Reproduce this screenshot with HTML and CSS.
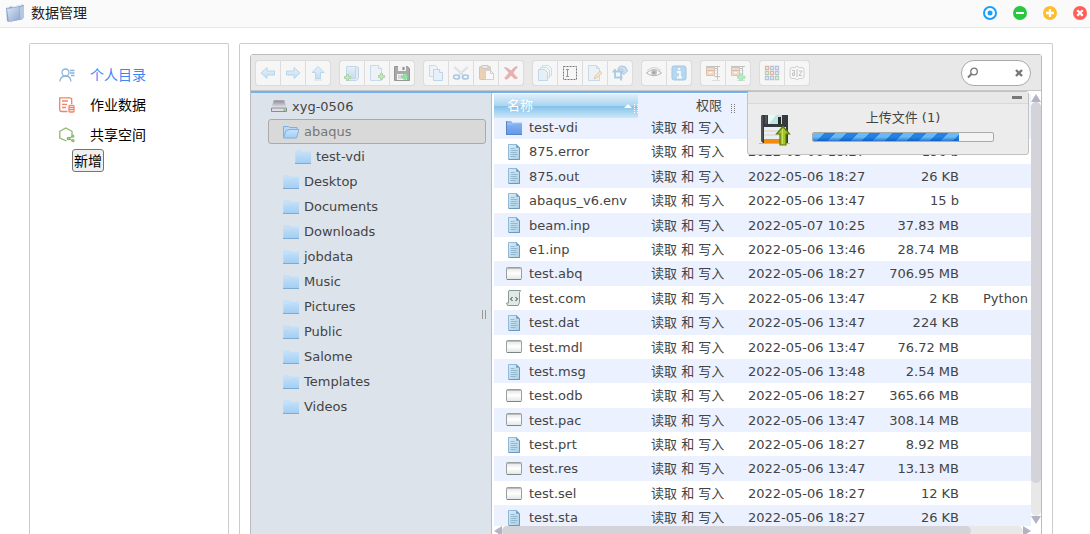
FILE: index.html
```html
<!DOCTYPE html>
<html lang="zh-CN">
<head>
<meta charset="utf-8">
<title>数据管理</title>
<link rel="stylesheet" href="styles.css">
</head>
<body>
<svg class="sprite" aria-hidden="true">
  <defs>
    <linearGradient id="g-blue" x2="0" y2="1"><stop offset="0" stop-color="#d3e9fb"/><stop offset="1" stop-color="#7db8ea"/></linearGradient>
    <linearGradient id="g-light" x2="0" y2="1"><stop offset="0" stop-color="#c9e2f8"/><stop offset="1" stop-color="#a2cff5"/></linearGradient>
    <linearGradient id="g-dir" x2="0" y2="1"><stop offset="0" stop-color="#8db8f2"/><stop offset="1" stop-color="#669be8"/></linearGradient>
    <linearGradient id="g-app" x2="0" y2="1"><stop offset="0" stop-color="#e2e2e2"/><stop offset=".5" stop-color="#fff"/><stop offset="1" stop-color="#dfe5e2"/></linearGradient>
    <linearGradient id="g-doc" x2="1" y2="1"><stop offset="0" stop-color="#d8ecf6"/><stop offset="1" stop-color="#a9d0e8"/></linearGradient>
    <linearGradient id="g-win" x2="1" y2="1"><stop offset="0" stop-color="#dce6f5"/><stop offset="1" stop-color="#8ba4cc"/></linearGradient>
    <linearGradient id="g-hdd" x2="0" y2="1"><stop offset="0" stop-color="#8d8d98"/><stop offset="1" stop-color="#ececf2"/></linearGradient>
    <symbol id="i-plus" viewBox="0 0 16 16"><path d="M2.500.5h2v2h2v2h-2v2h-2v-2h-2v-2h2z" fill="#84dd68" stroke="#3c9a36"/></symbol>
    <symbol id="i-back" viewBox="0 0 16 16"><path d="M1 8l6-5.500v3.500h7.500v4H7v3.500z" fill="url(#g-blue)" stroke="#58a7dc"/></symbol>
    <symbol id="i-fwd" viewBox="0 0 16 16"><path d="M15 8L9 2.500V6H1.500v4H9v3.500z" fill="url(#g-blue)" stroke="#58a7dc"/></symbol>
    <symbol id="i-up" viewBox="0 0 16 16"><path d="M8 1.500L2 7.500h3.500v6h5v-6H14z" fill="url(#g-blue)" stroke="#58a7dc"/><path d="M4 15h8" stroke="#8bbadb"/></symbol>
    <symbol id="i-copy" viewBox="0 0 16 16"><path d="M1.500.5h6l2 2v9h-8z" fill="#e1f0fb" stroke="#80b2db"/><path d="M5.500 4.500h6l3 3v8h-9z" fill="#d5e9f9" stroke="#6ca6d8"/><path d="M11.500 4.500v3h3" fill="#fff" stroke="#6ca6d8"/></symbol>
    <symbol id="i-mkdir" viewBox="0 0 16 16"><path d="M2.500 1.500h9v12h-9z" fill="url(#g-blue)" stroke="#77a8d3"/><path d="M11.500 1.500l3 1v11l-2 2h-10l1-2h8z" fill="#c5dcf2" stroke="#77a8d3"/><use href="#i-plus" x="0" y="9" width="16" height="16"/></symbol>
    <symbol id="i-mkfile" viewBox="0 0 16 16"><path d="M1.500.5h8l3 3v12h-11z" fill="#e0eefa" stroke="#7fb2dc"/><path d="M9.500.5v3h3" fill="#fff" stroke="#7fb2dc"/><use href="#i-plus" x="9" y="8" width="16" height="16"/></symbol>
    <symbol id="i-save" viewBox="0 0 16 16"><path d="M.5 1.500h13l2 2v12H.5z" fill="#777" stroke="#555"/><path d="M4 1h8v5H4zM3 9h10v6H3z" fill="#f2f2f2"/><path d="M9.500 2v3" stroke="#444" stroke-width="2"/><path d="M4 11h7M4 13h6" stroke="#999"/><path d="M9.500 8.500h3V11H15l-4 4.500L7 11h2.500z" fill="#43db71" stroke="#25a44a" stroke-width=".5"/></symbol>
    <symbol id="i-cut" viewBox="0 0 16 16"><path d="M1.500 2l10 9M14.500 2l-10 9" stroke="#92a8bc" stroke-width="2"/><path d="M2 2l10 9M14 2L4 11" stroke="#e4edf3"/><ellipse cx="3.500" cy="12" rx="3" ry="2" fill="none" stroke="#3986cf" stroke-width="1.700"/><ellipse cx="12.500" cy="12" rx="3" ry="2" fill="none" stroke="#3986cf" stroke-width="1.700"/></symbol>
    <symbol id="i-paste" viewBox="0 0 16 16"><rect x="1.500" y="1.500" width="11" height="13" rx="1" fill="#d99a55" stroke="#b77633"/><path d="M4 .5h6v3H4z" fill="#d9d9d9" stroke="#888"/><path d="M7.500 5.500h5l3 3v6h-8z" fill="#fff" stroke="#999"/><path d="M12.500 5.500v3h3" fill="none" stroke="#999"/></symbol>
    <symbol id="i-rm" viewBox="0 0 16 16"><path d="M1.500 2.500Q4 2 8 6q3-4 5.500-4.500L14.500 2Q12 4.500 10 8q2.500 3 4.500 5l-2.500 1Q10 12.500 8 10q-2 3-4.500 4.500L1.500 13Q4 11 6 7.700 4 5 1.500 3z" fill="#dc4848" stroke="#b22626" stroke-width=".5"/></symbol>
    <symbol id="i-dup" viewBox="0 0 16 16"><path d="M5.500.5h6l3 3v7h-9z" fill="#e9f4fb" stroke="#8bb9dd"/><path d="M3.500 2.500h6l3 3v7h-9z" fill="#e9f4fb" stroke="#8bb9dd"/><path d="M1.500 4.500h6l3 3v8h-9z" fill="#cfe5f7" stroke="#77abd8"/></symbol>
    <symbol id="i-rename" viewBox="0 0 16 16"><path d="M1.500 1.500h13v13h-13z" fill="none" stroke="#222" stroke-dasharray="2 1"/><path d="M4 4.500h3M4 11.500h3M5.500 4.500v7" stroke="#555"/></symbol>
    <symbol id="i-edit" viewBox="0 0 16 16"><path d="M1.500.5h8l3 3v12h-11z" fill="#dcecf9" stroke="#80b1da"/><path d="M9.500.5v3h3" fill="none" stroke="#80b1da"/><path d="M7 14l1-3 5-5 2 2-5 5z" fill="#edc278" stroke="#b77c37" stroke-width=".7"/></symbol>
    <symbol id="i-resize" viewBox="0 0 16 16"><path d="M3 4v8.500h7.500M.5 6.500h8.500v9" fill="none" stroke="#3c8bc8" stroke-width="1.800"/><path d="M6 5q0-4 4.500-4 3.500 0 4.500 4l.5 1-3.500 3.500L8.500 7H11q0-3-2-3Q7.500 4 7 6z" fill="#8cc4f0" stroke="#2b79bc"/></symbol>
    <symbol id="i-eye" viewBox="0 0 16 16"><path d="M.5 8Q8 1 15.500 8 8 13.500.5 8z" fill="#fff" stroke="#555"/><circle cx="8" cy="7.500" r="3" fill="#777"/><circle cx="8" cy="7.500" r="1.300" fill="#222"/><path d="M1 5.500Q8-.5 15 5.500" fill="none" stroke="#777" stroke-width=".7"/></symbol>
    <symbol id="i-info" viewBox="0 0 16 16"><rect x="1" y="1" width="14" height="14" rx="2" fill="#58a9e8" stroke="#347fbc"/><path d="M6 7h3v5M6 12.500h5M7.200 4h2" fill="none" stroke="#fff" stroke-width="1.800"/></symbol>
    <symbol id="i-zip" viewBox="0 0 16 16"><path d="M1.500 2.500h8v8h-8z" fill="#f0b277" stroke="#bd7344"/><path d="M2 5.500h7" stroke="#b55f3c"/><path d="M4 7.500h3" stroke="#fff"/><path d="M1 1.500h14M9.500 3.500H13M12.500 2v9M9.500 11.500H15M12.500 12v2.500" stroke="#777"/><path d="M10.500 5.500h4M10.500 8.500h4" stroke="#999" stroke-dasharray="1 1"/><path d="M7 15.500h8" stroke="#bbb"/></symbol>
    <symbol id="i-archive" viewBox="0 0 16 16"><use href="#i-zip" width="16" height="16"/><path d="M9.500 9v2H7.500v2.500h2v2h3v-2h2.500V11h-2.500V9z" fill="#54df79" stroke="#2fb658" stroke-width=".7"/></symbol>
    <symbol id="i-grid" viewBox="0 0 16 16"><g fill="#fff" stroke-width="1.300"><path d="M1.500 1.500h3v3h-3zM6.500 6.500h3v3h-3z" stroke="#c55320"/><path d="M6.500 1.500h3v3h-3zM11.500 1.500h3v3h-3zM11.500 6.500h3v3h-3zM1.500 11.500h3v3h-3zM6.500 11.500h3v3h-3z" stroke="#5578b6"/><path d="M1.500 6.500h3v3h-3zM11.500 11.500h3v3h-3z" stroke="#4f9b50"/></g></symbol>
    <symbol id="i-sort" viewBox="0 0 16 16"><path d="M3 2.500h3L8 1l2 1.500h3Q15 2.500 15 5v6q0 2.500-2 2.500h-3L8 15l-2-1.500H3Q1 13.500 1 11V5q0-2.500 2-2.500z" fill="#fafafa" stroke="#999"/><path d="M3 5.500h2.500v5H3.500v-2.500h2M8 4v8M10 6h3l-3 4.500h3" fill="none" stroke="#777"/></symbol>
    <symbol id="i-folder" viewBox="0 0 16 16"><path d="M0 1.500L1 1h5l2 2h8v11H0z" fill="url(#g-light)"/><path d="M0 4.500h6L8 3h8M0 2v11" fill="none" stroke="#c5e0f7"/><path d="M0 14.500h16" stroke="#80abd0"/></symbol>
    <symbol id="i-open" viewBox="0 0 16 16"><path d="M.5 13V2.500h5l1.500 1h7V6" fill="#b9daf6" stroke="#79b2e4"/><path d="M.5 14L3 6.500l4-1h9L13.500 14z" fill="url(#g-light)" stroke="#79b2e4"/></symbol>
    <symbol id="i-hdd" viewBox="0 0 16 16"><path d="M3 1.500h10L16 9H0z" fill="url(#g-hdd)"/><path d="M.5 9h15v3.500H.5z" fill="#dedee8" stroke="#77747e" stroke-width=".8"/><path d="M2.500 2h11" stroke="#9a97a2"/><path d="M12.500 11h2" stroke="#43cf35" stroke-width="1.500"/></symbol>
    <symbol id="i-dir" viewBox="0 0 16 16"><path d="M0 2l1-1h4l2 2h9v11H0z" fill="url(#g-dir)"/><path d="M0 4h6l2-1h8" fill="none" stroke="#a6c8f6"/><path d="M0 14.500h16M.5 1v13" stroke="#5484c9"/></symbol>
    <symbol id="i-txt" viewBox="0 0 16 16"><path d="M2.500.5h8l3 3v12h-11z" fill="url(#g-doc)" stroke="#8fb9d6"/><path d="M10.500.5v3h3z" fill="#6294c2" stroke="#7faccc"/><path d="M4.500 4.500h4M4.500 6.500h7M4.500 8.500h6M4.500 10.500h7M4.500 12.500h5" stroke="#86aec5" stroke-width=".8"/><path d="M3 15.500h10.500V4" fill="none" stroke="#6d97c0"/></symbol>
    <symbol id="i-app" viewBox="0 0 16 16"><rect x=".5" y="1.500" width="15" height="12" rx="1" fill="url(#g-app)" stroke="#97a09e"/><path d="M1 2.500h14" stroke="#bbb"/><path d="M1 13.500h14" stroke="#7b8582"/></symbol>
    <symbol id="i-code" viewBox="0 0 16 16"><path d="M3 .5h11.500l-1 2v10L12 15.500H1.500L.5 13h2V2z" fill="#dfe9e5" stroke="#849a91"/><path d="M6.500 7L4.500 9l2 2M9.500 7l2 2-2 2" fill="none" stroke="#333"/></symbol>
  </defs>
</svg>

<header class="titlebar">
  <svg class="titlebar-icon" viewBox="0 0 20 20"><path d="M1 5l5-2 2 1 9-2.500 2 1V14l-2 2.500L4 19l-2-1z" fill="#8ba3cc"/><path d="M2 6l12-2 1 12-11 3z" fill="url(#g-win)"/><path d="M14.500 4L19 3v11l-3.500 2.500z" fill="#b7c8e3"/><path d="M2 5l4-2 2 1 9-2" fill="none" stroke="#e4ebf5"/></svg>
  <h1>数据管理</h1>
  <div class="window-actions">
    <button aria-label="还原"><svg viewBox="0 0 14 14"><circle cx="7" cy="7" r="6" fill="#fff" stroke="#18a0fb" stroke-width="2"/><circle cx="7" cy="7" r="2.500" fill="#18a0fb"/></svg></button>
    <button aria-label="最小化"><svg viewBox="0 0 14 14"><circle cx="7" cy="7" r="7" fill="#28c940"/><path d="M3 7h8" stroke="#fff" stroke-width="2"/></svg></button>
    <button aria-label="最大化"><svg viewBox="0 0 14 14"><circle cx="7" cy="7" r="7" fill="#ffbd2e"/><path d="M3 7h8M7 3v8" stroke="#fff" stroke-width="2.300"/></svg></button>
    <button aria-label="关闭"><svg viewBox="0 0 14 14"><circle cx="7" cy="7" r="7" fill="#ff5f57"/><path d="M4.300 4.300l5.400 5.400M9.700 4.300L4.300 9.700" stroke="#fff" stroke-width="2.300"/></svg></button>
  </div>
</header>

<main class="workspace">
  <nav class="sidebar">
    <a class="nav-link active" href="#home"><svg viewBox="0 0 16 16" fill="none" stroke="#8bb3da" stroke-width="1.300"><circle cx="6.500" cy="5.500" r="3.500"/><path d="M.8 14.500Q1.500 9 6.500 9t5.500 5.500M11 3.500h4.500M11 6h4.500M12 8.500h3.500"/></svg>个人目录</a>
    <a class="nav-link" href="#jobs"><svg viewBox="0 0 16 16" fill="none" stroke="#f08468" stroke-width="1.300"><path d="M8.500 14.500h-6Q.7 14.500.7 12.500V.8h10q2 0 2 2V7M3 4h6M3 7.300h5M3 10.500h4"/><rect x="10" y="8.500" width="5" height="6.500" rx="1"/><path d="M10 10.700h5M10 12.700h5"/></svg>作业数据</a>
    <a class="nav-link" href="#shared"><svg viewBox="0 0 16 16" fill="none" stroke="#8bb86c" stroke-width="1.300"><path d="M7.500 14L.8 11V4.300L6.800 1 13 4.300V8"/><path d="M9.500 11.500l4-2M9.500 11.500l4 2"/><circle cx="9.500" cy="11.500" r="1.200"/><circle cx="13.700" cy="9.200" r="1"/><circle cx="14" cy="13.700" r="1"/></svg>共享空间</a>
    <button class="add-button">新增</button>
  </nav>

  <section class="panel">
    <div class="finder">
      <div class="toolbar">
        <div class="group">
          <button aria-label="后退"><svg><use href="#i-back"/></svg></button><button aria-label="前进"><svg><use href="#i-fwd"/></svg></button><button aria-label="上级目录"><svg><use href="#i-up"/></svg></button>
        </div>
        <div class="group">
          <button aria-label="新建文件夹"><svg><use href="#i-mkdir"/></svg></button><button aria-label="新建文件"><svg><use href="#i-mkfile"/></svg></button><button class="enabled" aria-label="上传"><svg><use href="#i-save"/></svg></button>
        </div>
        <div class="group">
          <button aria-label="复制"><svg><use href="#i-copy"/></svg></button><button aria-label="剪切"><svg><use href="#i-cut"/></svg></button><button aria-label="粘贴"><svg><use href="#i-paste"/></svg></button><button aria-label="删除"><svg><use href="#i-rm"/></svg></button>
        </div>
        <div class="group">
          <button aria-label="创建副本"><svg><use href="#i-dup"/></svg></button><button class="enabled" aria-label="重命名"><svg><use href="#i-rename"/></svg></button><button aria-label="编辑"><svg><use href="#i-edit"/></svg></button><button aria-label="调整尺寸"><svg><use href="#i-resize"/></svg></button>
        </div>
        <div class="group">
          <button aria-label="预览"><svg><use href="#i-eye"/></svg></button><button aria-label="信息"><svg><use href="#i-info"/></svg></button>
        </div>
        <div class="group">
          <button aria-label="解压"><svg><use href="#i-zip"/></svg></button><button aria-label="压缩"><svg><use href="#i-archive"/></svg></button>
        </div>
        <div class="group">
          <button aria-label="图标视图"><svg><use href="#i-grid"/></svg></button><button aria-label="排序"><svg><use href="#i-sort"/></svg></button>
        </div>
        <div class="search">
          <svg viewBox="0 0 12 12" fill="none" stroke="#777"><circle cx="7" cy="4.500" r="3.300" stroke-width="1.300"/><path d="M4.500 7L1 10.500" stroke-width="2"/></svg>
          <input type="text" aria-label="搜索">
          <button aria-label="清除"><svg viewBox="0 0 8 8"><path d="M1 1l6 6M7 1L1 7" stroke="#777" stroke-width="2.400"/></svg></button>
        </div>
      </div>
      <div class="loading"></div>

      <div class="browser">
        <div class="tree">
          <a class="node" href="#root"><svg><use href="#i-hdd"/></svg>xyg-0506</a>
          <a class="node level-1 selected" href="#abaqus"><svg><use href="#i-open"/></svg>abaqus</a>
          <a class="node level-2" href="#test-vdi"><svg><use href="#i-folder"/></svg>test-vdi</a>
          <a class="node level-1" href="#desktop"><svg><use href="#i-folder"/></svg>Desktop</a>
          <a class="node level-1" href="#documents"><svg><use href="#i-folder"/></svg>Documents</a>
          <a class="node level-1" href="#downloads"><svg><use href="#i-folder"/></svg>Downloads</a>
          <a class="node level-1" href="#jobdata"><svg><use href="#i-folder"/></svg>jobdata</a>
          <a class="node level-1" href="#music"><svg><use href="#i-folder"/></svg>Music</a>
          <a class="node level-1" href="#pictures"><svg><use href="#i-folder"/></svg>Pictures</a>
          <a class="node level-1" href="#public"><svg><use href="#i-folder"/></svg>Public</a>
          <a class="node level-1" href="#salome"><svg><use href="#i-folder"/></svg>Salome</a>
          <a class="node level-1" href="#templates"><svg><use href="#i-folder"/></svg>Templates</a>
          <a class="node level-1" href="#videos"><svg><use href="#i-folder"/></svg>Videos</a>
          <span class="splitter"></span>
        </div>

        <div class="files">
          <div class="viewport">
            <table>
              <colgroup><col class="col-name"><col class="col-perm"><col class="col-date"><col class="col-size"><col></colgroup>
              <thead><tr>
                <th class="sorted"><div class="head">名称<span class="sort-arrow"></span><span class="grip"></span></div></th>
                <th><div class="head head-right">权限<span class="grip"></span></div></th>
                <th></th><th></th><th></th>
              </tr></thead>
              <tbody>
                <tr><td><svg><use href="#i-dir"/></svg>test-vdi</td><td>读取 和 写入</td><td></td><td></td><td></td></tr>
                <tr><td><svg><use href="#i-txt"/></svg>875.error</td><td>读取 和 写入</td><td>2022-05-06 18:27</td><td>196 b</td><td></td></tr>
                <tr><td><svg><use href="#i-txt"/></svg>875.out</td><td>读取 和 写入</td><td>2022-05-06 18:27</td><td>26 KB</td><td></td></tr>
                <tr><td><svg><use href="#i-txt"/></svg>abaqus_v6.env</td><td>读取 和 写入</td><td>2022-05-06 13:47</td><td>15 b</td><td></td></tr>
                <tr><td><svg><use href="#i-txt"/></svg>beam.inp</td><td>读取 和 写入</td><td>2022-05-07 10:25</td><td>37.83 MB</td><td></td></tr>
                <tr><td><svg><use href="#i-txt"/></svg>e1.inp</td><td>读取 和 写入</td><td>2022-05-06 13:46</td><td>28.74 MB</td><td></td></tr>
                <tr><td><svg><use href="#i-app"/></svg>test.abq</td><td>读取 和 写入</td><td>2022-05-06 18:27</td><td>706.95 MB</td><td></td></tr>
                <tr><td><svg><use href="#i-code"/></svg>test.com</td><td>读取 和 写入</td><td>2022-05-06 13:47</td><td>2 KB</td><td>Python</td></tr>
                <tr><td><svg><use href="#i-txt"/></svg>test.dat</td><td>读取 和 写入</td><td>2022-05-06 13:47</td><td>224 KB</td><td></td></tr>
                <tr><td><svg><use href="#i-app"/></svg>test.mdl</td><td>读取 和 写入</td><td>2022-05-06 13:47</td><td>76.72 MB</td><td></td></tr>
                <tr><td><svg><use href="#i-txt"/></svg>test.msg</td><td>读取 和 写入</td><td>2022-05-06 13:48</td><td>2.54 MB</td><td></td></tr>
                <tr><td><svg><use href="#i-app"/></svg>test.odb</td><td>读取 和 写入</td><td>2022-05-06 18:27</td><td>365.66 MB</td><td></td></tr>
                <tr><td><svg><use href="#i-app"/></svg>test.pac</td><td>读取 和 写入</td><td>2022-05-06 13:47</td><td>308.14 MB</td><td></td></tr>
                <tr><td><svg><use href="#i-txt"/></svg>test.prt</td><td>读取 和 写入</td><td>2022-05-06 18:27</td><td>8.92 MB</td><td></td></tr>
                <tr><td><svg><use href="#i-app"/></svg>test.res</td><td>读取 和 写入</td><td>2022-05-06 13:47</td><td>13.13 MB</td><td></td></tr>
                <tr><td><svg><use href="#i-app"/></svg>test.sel</td><td>读取 和 写入</td><td>2022-05-06 18:27</td><td>12 KB</td><td></td></tr>
                <tr><td><svg><use href="#i-txt"/></svg>test.sta</td><td>读取 和 写入</td><td>2022-05-06 18:27</td><td>26 KB</td><td></td></tr>
              </tbody>
            </table>
          </div>
          <div class="scroll-v">
            <svg viewBox="0 0 10 8"><path d="M5 0l5 8H0z" fill="#b3b3c4"/></svg>
            <div class="track"><div class="thumb"></div></div>
            <svg viewBox="0 0 10 8"><path d="M0 0h10L5 8z" fill="#b3b3c4"/></svg>
          </div>
          <div class="scroll-h">
            <svg viewBox="0 0 8 10"><path d="M8 0v10L0 5z" fill="#b3b3c4"/></svg>
            <div class="track"><div class="thumb"></div></div>
            <svg viewBox="0 0 8 10"><path d="M0 0l8 5-8 5z" fill="#b3b3c4"/></svg>
          </div>
        </div>
      </div>

      <div class="upload" role="dialog" aria-label="上传文件">
        <div class="upload-bar"><button aria-label="最小化"></button></div>
        <div class="upload-body">
          <svg class="floppy" viewBox="0 0 32 32"><path d="M0 29.500h31" stroke="#c5b8a8"/><path d="M2 2l1-1h26v28H4l-2-2z" fill="#343a3f"/><path d="M3 2v25M7 1v9" stroke="#687177"/><path d="M9 1h14v9H9z" fill="#c1e4e2"/><path d="M9 1h8l-7 9H9z" fill="#e8f9f5"/><path d="M19 3h3v7h-3z" fill="#272b2d"/><path d="M5 13h22v12H5z" fill="#e7f0f7"/><path d="M5 17h22M5 21h22" stroke="#e8cdb8"/><path d="M5 25h22v4H5z" fill="#f58b0b"/><path d="M24 12.500L30.500 20H27v11h-6V20h-3.500z" fill="#a3c626" stroke="#577d0d" stroke-width="1.200"/><path d="M23.500 15v15" stroke="#cde35b"/></svg>
          <div class="upload-info">
            <div>上传文件 (1)</div>
            <div class="progress" role="progressbar" aria-valuenow="80"><div class="progress-fill" style="width:81%"></div></div>
          </div>
        </div>
      </div>
    </div>
  </section>
</main>
</body>
</html>
```

FILE: styles.css
```css
* { box-sizing: border-box; }

body {
  margin: 0;
  height: 100vh;
  overflow: hidden;
  display: flex;
  flex-direction: column;
  background: #fff;
  color: #222;
  font: 14px/20px "Liberation Sans", "Noto Sans CJK SC", sans-serif;
}

button { margin: 0; padding: 0; border: 0; background: none; font: inherit; color: inherit; }
svg { display: block; flex: none; }
a { color: inherit; text-decoration: none; }
.sprite { position: absolute; width: 0; height: 0; }

/* Title bar */
.titlebar {
  display: flex;
  align-items: center;
  flex: none;
  height: 28px;
  padding: 0 3px 2px 5px;
  background: #fafafa;
  border-bottom: 1px solid #e6e6e6;
}
.titlebar-icon { width: 20px; height: 20px; }
.titlebar h1 { margin: 0 0 0 6px; font-size: 14px; font-weight: 400; }
.window-actions { display: flex; gap: 16px; margin-left: auto; }
.window-actions svg { width: 14px; height: 14px; }

/* Page columns */
.workspace {
  display: flex;
  flex: 1;
  gap: 10px;
  padding: 15px 37px 0 29px;
}
.sidebar, .panel { border: 1px solid #ccc; border-bottom: 0; border-radius: 2px 2px 0 0; }
.sidebar { flex: none; width: 200px; padding: 16px 29px 0; color: #000; }
.nav-link { display: flex; align-items: center; gap: 15px; height: 30px; }
.nav-link svg { width: 16px; height: 16px; }
.nav-link.active { color: #3b86f7; }
.add-button {
  display: block;
  height: 23px;
  margin: -1px 0 0 13px;
  padding: 0 1px;
  border: 1px solid #767676;
  border-radius: 3px;
  background: #efefef;
}
.panel { flex: 1; min-width: 0; padding: 10px; }

/* File manager */
.finder {
  position: relative;
  border: 1px solid #bbb;
  border-radius: 3px;
  color: #444;
  font: 13px/1.875 "DejaVu Sans", "Noto Sans CJK SC", sans-serif;
}
.toolbar {
  display: flex;
  align-items: center;
  gap: 8px;
  height: 36px;
  padding: 0 10px 0 4px;
  background: #e8e8e8;
  border-bottom: 1px solid #c6c6c6;
}
.group {
  display: flex;
  gap: 1px;
  padding: 1px;
  border-radius: 3px;
  background: #dcdcdc;
}
.group button { display: grid; place-items: center; width: 24px; height: 24px; background: #f6f6f6; }
.group button:first-child { border-radius: 3px 0 0 3px; }
.group button:last-child { border-radius: 0 3px 3px 0; }
.group svg { width: 16px; height: 16px; opacity: .4; }
.group .enabled svg { opacity: .6; }
.search {
  display: flex;
  align-items: center;
  width: 70px;
  height: 26px;
  margin-left: auto;
  padding: 0 7px 0 5px;
  border: 1px solid #aaa;
  border-radius: 13px;
  background: #fff;
}
.search > svg { width: 12px; height: 12px; }
.search input { flex: 1; width: 0; min-width: 0; padding: 0; border: 0; outline: 0; background: none; }
.search button svg { width: 8px; height: 8px; }
.loading { width: 70%; height: 2px; background: #74aff2; }
.browser { display: flex; height: calc(100vh - 92px); }

/* Folder tree */
.tree {
  position: relative;
  flex: none;
  width: 241px;
  padding: 1px 5px 0 17px;
  background: #dde3eb;
  border-right: 1px solid #bbb;
}
.node {
  display: flex;
  align-items: center;
  gap: 5px;
  padding-left: 2px;
  border: 1px solid transparent;
  border-radius: 3px;
  line-height: 1.77;
}
.node svg { width: 16px; height: 16px; }
.level-1 { padding-left: 14px; }
.level-2 { padding-left: 26px; }
.node.selected { background: #d9d9d9; border-color: #aaa; color: #777; }
.splitter {
  position: absolute;
  top: 49%;
  right: 5px;
  width: 4px;
  height: 9px;
  border: solid #999;
  border-width: 0 1px;
}

/* File list */
.files {
  flex: 1;
  min-width: 0;
  display: grid;
  grid-template: calc(100vh - 102px) 10px / 1fr 10px;
  padding: 1px 0 0 2px;
}
.viewport { overflow: hidden; }
table { width: 100%; table-layout: fixed; border-collapse: collapse; white-space: nowrap; }
.col-name { width: 144px; }
.col-perm { width: 97px; }
.col-date { width: 143px; }
.col-size { width: 94px; }
th { height: 21px; padding: 0; background: #ebf1ff; font-weight: 400; text-align: left; }
td { padding: 1px 0 0 13px; overflow: hidden; line-height: 1.8; }
td:first-child { display: flex; align-items: center; gap: 7px; padding-left: 12px; }
td:nth-child(4) { padding: 1px 13px 0 0; text-align: right; }
td:nth-child(5) { padding-left: 11px; }
td svg { width: 16px; height: 16px; }
tbody tr:nth-child(odd) { background: #ebf1ff; }
.head {
  position: relative;
  display: flex;
  align-items: center;
  height: 24px;
  margin-bottom: -3px;
  padding: 0 0 0 13px;
}
.sorted .head {
  background: linear-gradient(#e0eff9 0, #a9d5f0 48%, #83c0e9 50%, #cbe8f9 100%);
  color: #fff;
}
.head-right { justify-content: flex-end; gap: 9px; }
.sort-arrow {
  margin: 0 2px 0 auto;
  border: solid transparent;
  border-width: 0 4px 4px;
  border-bottom-color: #fff;
}
.grip { width: 4px; height: 9px; margin-top: 5px; border: dotted #777; border-width: 0 1px; }
.sorted .grip { border-color: #fff; }

/* Scroll bars */
.scroll-v, .scroll-h { display: flex; }
.scroll-v { flex-direction: column; }
.scroll-v svg { width: 10px; height: 8px; }
.scroll-v svg:last-child { margin-bottom: 2px; }
.scroll-h svg { width: 8px; height: 10px; }
.track { flex: 1; border-radius: 5px; background: #e8e8e8; }
.thumb { border-radius: 5px; background: #d5d3da; }
.scroll-v .thumb { height: 92%; }
.scroll-h .thumb { width: 90%; height: 100%; }

/* Upload dialog */
.upload {
  position: absolute;
  top: 36px;
  right: 12px;
  width: 282px;
  border: 1px solid #c2c2c2;
  border-radius: 3px;
  background: #ececec;
  line-height: 18px;
}
.upload-bar {
  display: flex;
  justify-content: flex-end;
  height: 12px;
  padding: 4px 6px 0 0;
  border-bottom: 1px solid #d8d8d8;
  background: #e8e8e8;
}
.upload-bar button { width: 10px; height: 3px; background: #777; }
.upload-body { display: flex; gap: 21px; padding: 5px 34px 8px 11px; }
.floppy { width: 32px; height: 32px; margin-top: 5px; }
.upload-info { flex: 1; text-align: center; }
.progress { height: 10px; margin-top: 5px; border: 1px solid #aaa; border-radius: 2px; background: #f3f3f3; overflow: hidden; }
.progress-fill {
  height: 100%;
  background:
    linear-gradient(transparent 50%, #0749af99),
    repeating-linear-gradient(135deg, #68b9f7 0 8px, #2184e4 8px 16px);
}
```
